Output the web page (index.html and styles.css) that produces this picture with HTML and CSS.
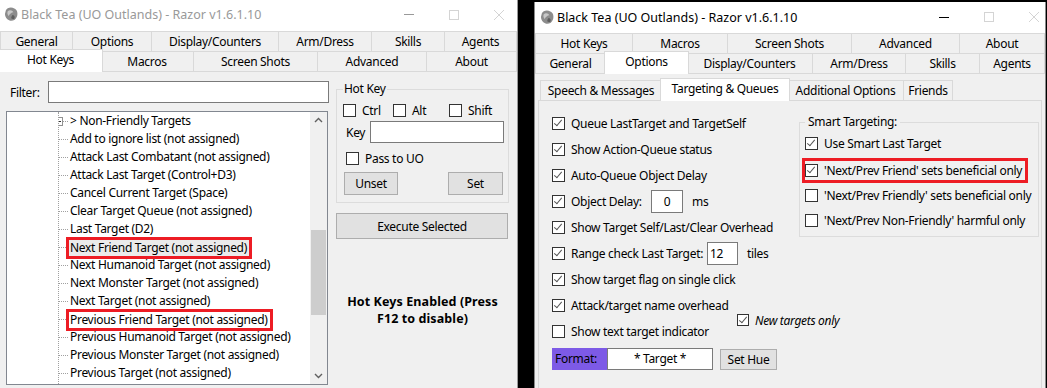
FILE: index.html
```html
<!DOCTYPE html>
<html lang="en">
<head>
  <meta charset="UTF-8">
  <title>Razor - Hot Keys / Targeting</title>
  <link rel="stylesheet" href="styles.css">
</head>
<body>
  <div class="desktop">

    <!-- Left window: Hot Keys tab -->
    <section class="window window-left">
      <div class="titlebar">
        <svg class="app-icon" viewBox="0 0 16 17"><path d="M2 4 C3 1 8 0 11 2 C14 3 15 7 14 10 C13 14 9 16 6 15 C3 14 1 11 1 8 Z" fill="#8c8c8c"/><path d="M4 5 C6 3 9 4 10 6 C8 6 6 8 5 10 C4 9 3 7 4 5 Z" fill="#c8c8c8"/><path d="M9 9 C11 9 12 11 11 13 C9 14 7 13 8 11 Z" fill="#5e5e5e"/></svg>
        <span class="title">Black Tea (UO Outlands) - Razor v1.6.1.10</span>
        <div class="controls">
          <span class="ctl-min"></span>
          <span class="ctl-max"></span>
          <svg class="ctl-close" viewBox="0 0 10 10"><path d="M0 0 L10 10 M10 0 L0 10" stroke="currentColor" stroke-width="1"/></svg>
        </div>
      </div>

      <div class="tabstrip">
        <div class="tabrow lrow-1">
          <div class="tab">General</div>
          <div class="tab">Options</div>
          <div class="tab">Display/Counters</div>
          <div class="tab">Arm/Dress</div>
          <div class="tab">Skills</div>
          <div class="tab">Agents</div>
        </div>
        <div class="tabrow lrow-2">
          <div class="tab active">Hot Keys</div>
          <div class="tab">Macros</div>
          <div class="tab">Screen Shots</div>
          <div class="tab">Advanced</div>
          <div class="tab">About</div>
        </div>
      </div>

      <div class="page hotkeys-page">
        <div class="hk-left">
          <div class="filter-row">
            <span class="filter-label">Filter:</span>
            <span class="textbox filter-box"></span>
          </div>
          <div class="tree">
            <ul class="tree-items">
              <li class="has-children">
                <svg class="expander" viewBox="0 0 9 9"><rect x="0.5" y="0.5" width="8" height="8" fill="#fff" stroke="#919191"/><path d="M2 4.5 H7 M4.5 2 V7" stroke="#333"/></svg>
                <span class="node">&gt; Non-Friendly Targets</span>
              </li>
              <li><span class="node">Add to ignore list (not assigned)</span></li>
              <li><span class="node">Attack Last Combatant (not assigned)</span></li>
              <li><span class="node">Attack Last Target (Control+D3)</span></li>
              <li><span class="node">Cancel Current Target (Space)</span></li>
              <li><span class="node">Clear Target Queue (not assigned)</span></li>
              <li><span class="node">Last Target (D2)</span></li>
              <li><span class="node selected marked">Next Friend Target (not assigned)</span></li>
              <li><span class="node">Next Humanoid Target (not assigned)</span></li>
              <li><span class="node">Next Monster Target (not assigned)</span></li>
              <li><span class="node">Next Target (not assigned)</span></li>
              <li><span class="node marked">Previous Friend Target (not assigned)</span></li>
              <li><span class="node">Previous Humanoid Target (not assigned)</span></li>
              <li><span class="node">Previous Monster Target (not assigned)</span></li>
              <li><span class="node">Previous Target (not assigned)</span></li>
            </ul>
            <div class="scrollbar">
              <svg class="sb-arrow" viewBox="0 0 17 17"><path d="M5 10 L8.5 6.5 L12 10" fill="none" stroke="#606060" stroke-width="1.4"/></svg>
              <div class="sb-track"><div class="sb-thumb"></div></div>
              <svg class="sb-arrow" viewBox="0 0 17 17"><path d="M5 7 L8.5 10.5 L12 7" fill="none" stroke="#606060" stroke-width="1.4"/></svg>
            </div>
          </div>
        </div>

        <div class="hk-right">
          <fieldset class="groupbox hotkey-group">
            <legend>Hot Key</legend>
            <div class="mod-row">
              <label class="chk"><span class="box"></span>Ctrl</label>
              <label class="chk"><span class="box"></span>Alt</label>
              <label class="chk"><span class="box"></span>Shift</label>
            </div>
            <div class="key-row">
              <span class="key-label">Key</span>
              <span class="textbox key-box"></span>
            </div>
            <label class="chk pass-row"><span class="box"></span>Pass to UO</label>
            <div class="btn-row">
              <span class="btn btn-unset">Unset</span>
              <span class="btn btn-set">Set</span>
            </div>
          </fieldset>
          <span class="btn btn-execute">Execute Selected</span>
          <p class="hk-status">Hot Keys Enabled (Press<br>F12 to disable)</p>
        </div>
      </div>
    </section>

    <!-- Right window: Options > Targeting & Queues -->
    <section class="window window-right">
      <div class="titlebar active">
        <svg class="app-icon" viewBox="0 0 16 17"><path d="M2 4 C3 1 8 0 11 2 C14 3 15 7 14 10 C13 14 9 16 6 15 C3 14 1 11 1 8 Z" fill="#8c8c8c"/><path d="M4 5 C6 3 9 4 10 6 C8 6 6 8 5 10 C4 9 3 7 4 5 Z" fill="#c8c8c8"/><path d="M9 9 C11 9 12 11 11 13 C9 14 7 13 8 11 Z" fill="#5e5e5e"/></svg>
        <span class="title">Black Tea (UO Outlands) - Razor v1.6.1.10</span>
        <div class="controls">
          <span class="ctl-min"></span>
          <span class="ctl-max"></span>
          <svg class="ctl-close" viewBox="0 0 10 10"><path d="M0 0 L10 10 M10 0 L0 10" stroke="currentColor" stroke-width="1"/></svg>
        </div>
      </div>

      <div class="tabstrip">
        <div class="tabrow rrow-1">
          <div class="tab">Hot Keys</div>
          <div class="tab">Macros</div>
          <div class="tab">Screen Shots</div>
          <div class="tab">Advanced</div>
          <div class="tab">About</div>
        </div>
        <div class="tabrow rrow-2">
          <div class="tab">General</div>
          <div class="tab active">Options</div>
          <div class="tab">Display/Counters</div>
          <div class="tab">Arm/Dress</div>
          <div class="tab">Skills</div>
          <div class="tab">Agents</div>
        </div>
      </div>

      <div class="page options-page">
        <div class="subtabs">
          <div class="subtab">Speech &amp; Messages</div>
          <div class="subtab active">Targeting &amp; Queues</div>
          <div class="subtab">Additional Options</div>
          <div class="subtab">Friends</div>
        </div>

        <div class="subpage tq-page">
          <div class="tq-options">
            <label class="chk opt"><span class="box on"></span>Queue LastTarget and TargetSelf</label>
            <label class="chk opt"><span class="box on"></span>Show Action-Queue status</label>
            <label class="chk opt"><span class="box on"></span>Auto-Queue Object Delay</label>
            <div class="chk opt">
              <span class="box on"></span><span class="delay-label">Object Delay:</span>
              <span class="textbox num-box centered">0</span><span class="unit">ms</span>
            </div>
            <label class="chk opt"><span class="box on"></span>Show Target Self/Last/Clear Overhead</label>
            <div class="chk opt">
              <span class="box on"></span><span class="range-label">Range check Last Target:</span>
              <span class="textbox num-box">12</span><span class="unit">tiles</span>
            </div>
            <label class="chk opt"><span class="box on"></span>Show target flag on single click</label>
            <div class="opt-pair">
              <label class="chk opt"><span class="box on"></span>Attack/target name overhead</label>
              <label class="chk sub-opt"><span class="box on"></span>New targets only</label>
              <label class="chk opt"><span class="box"></span>Show text target indicator</label>
            </div>
            <div class="format-row">
              <span class="format-label">Format:</span>
              <span class="textbox format-box">* Target *</span>
              <span class="btn btn-hue">Set Hue</span>
            </div>
          </div>

          <fieldset class="groupbox smart-group">
            <legend>Smart Targeting:</legend>
            <label class="chk smart-opt"><span class="box on"></span>Use Smart Last Target</label>
            <label class="chk smart-opt marked"><span class="box on"></span>'Next/Prev Friend' sets beneficial only</label>
            <label class="chk smart-opt"><span class="box"></span>'Next/Prev Friendly' sets beneficial only</label>
            <label class="chk smart-opt"><span class="box"></span>'Next/Prev Non-Friendly' harmful only</label>
          </fieldset>
        </div>
      </div>
    </section>

  </div>
</body>
</html>
```

FILE: styles.css
```css
/* Razor window mock-up */
* {
  box-sizing: border-box;
}

body {
  margin: 0;
  background-color: #000;
  font-family: "Noto Sans", "Open Sans", sans-serif;
  font-size: 12px;
  letter-spacing: -0.3px;
  color: #000;
}

.desktop {
  display: flex;
  align-items: flex-start;
  height: 388px;
  overflow: hidden;
}

.window {
  background-color: #f0f0f0;
  height: 388px;
  overflow: hidden;
}

.window-left {
  width: 518px;
  border-right: 1px solid #9a9a9a;
}

.window-right {
  width: 512px;
  margin-left: 16px;
  margin-top: 2px;
  border-left: 1px solid #8a8a8a;
  border-right: 1px solid #8a8a8a;
}

/* title bar */
.titlebar {
  height: 31px;
  background-color: #fff;
  display: flex;
  align-items: center;
  padding: 0 13px 2px 4px;
}

.window-right .titlebar {
  padding: 0 6px 1px 5px;
}

.app-icon {
  width: 15px;
  height: 17px;
  flex: none;
}

.title {
  margin-left: 2px;
  color: #999;
  font-size: 12.5px;
  letter-spacing: 0;
  white-space: nowrap;
}

.titlebar.active .title {
  color: #000;
}

.controls {
  margin-left: auto;
  display: flex;
  align-items: center;
  gap: 35px;
  color: #d4d4d4;
}

.ctl-min {
  width: 10px;
  height: 1px;
  background-color: #999;
}

.titlebar.active .ctl-min {
  background-color: #000;
}

.ctl-max {
  width: 10px;
  height: 10px;
  border: 1px solid #d4d4d4;
}

.ctl-close {
  width: 10px;
  height: 10px;
}

/* tab strips */
.tabrow {
  display: grid;
  height: 20px;
}

.lrow-1 { grid-template-columns: 73px 79px 127px 93px 73px 1fr; }
.lrow-2 { grid-template-columns: 101px 93px 124px 109px 1fr; }
.rrow-1 { grid-template-columns: 98px 95px 124px 108px 1fr; }
.rrow-2 { grid-template-columns: 71px 81px 126px 93px 74px 1fr; }

.tab {
  display: flex;
  align-items: center;
  justify-content: center;
  background-color: #f0f0f0;
  border-top: 1px solid #d9d9d9;
  border-right: 1px solid #d9d9d9;
  white-space: nowrap;
  padding-bottom: 1px;
}

.tab:first-child {
  border-left: 1px solid #d9d9d9;
}

.tab.active {
  position: relative;
  z-index: 1;
  background-color: #fff;
  margin: -2px -2px -1px -2px;
  border-left: 1px solid #d9d9d9;
  padding-bottom: 3px;
}

.page {
  border-top: 1px solid #d9d9d9;
  height: 100%;
}

/* hot keys page */
.hotkeys-page {
  display: flex;
  gap: 7px;
  padding: 9px 0 0 6px;
}

.hk-left {
  width: 323px;
  flex: none;
}

.filter-row {
  display: flex;
  align-items: center;
  height: 22px;
}

.filter-label {
  margin-left: 4px;
}

.textbox {
  display: block;
  height: 22px;
  background-color: #fff;
  border: 1px solid #7a7a7a;
}

.filter-box {
  width: 281px;
  margin-left: auto;
}

.tree {
  display: flex;
  width: 322px;
  height: 274px;
  margin-top: 8px;
  border: 1px solid #828790;
  background-color: #fff;
}

.tree-items {
  flex: 1;
  list-style: none;
  margin: 0 0 0 51px;
  padding: 0;
  border-left: 1px dotted #a0a0a0;
  overflow: hidden;
}

.tree-items li {
  position: relative;
  height: 18px;
  display: flex;
  align-items: center;
  white-space: nowrap;
}

.tree-items li::before {
  content: "";
  width: 9px;
  margin-right: 1px;
  border-top: 1px dotted #a0a0a0;
  flex: none;
}

.expander {
  position: absolute;
  left: -5px;
  top: 5px;
  width: 9px;
  height: 9px;
}

.node {
  padding: 0 1px;
  line-height: 16px;
}

.node.selected {
  background-color: #ebebeb;
}

.node.marked {
  align-self: flex-end;
  outline: 3px solid #ed1c24;
  padding-right: 2px;
}

.scrollbar {
  width: 17px;
  flex: none;
  display: flex;
  flex-direction: column;
  background-color: #f0f0f0;
}

.sb-arrow {
  width: 17px;
  height: 17px;
  flex: none;
}

.sb-track {
  flex: 1;
  padding: 101px 1px 0;
}

.sb-thumb {
  height: 85px;
  background-color: #cdcdcd;
}

.hk-right {
  width: 173px;
  flex: none;
  display: flex;
  flex-direction: column;
}

/* group boxes */
.groupbox {
  margin: 0;
  min-width: 0;
  border: 1px solid #dcdcdc;
}

.groupbox legend {
  line-height: 16px;
}

.hotkey-group {
  padding: 0 5px 7px 6px;
}

.hotkey-group legend {
  padding: 0 1px;
}

/* checkboxes */
.chk {
  display: flex;
  align-items: center;
  white-space: nowrap;
}

.box {
  position: relative;
  width: 13px;
  height: 13px;
  flex: none;
  margin-right: 6px;
  border: 1px solid #333;
  background-color: #fff;
}

.box.on::after {
  content: "";
  position: absolute;
  left: 3px;
  top: 0px;
  width: 3px;
  height: 7px;
  border-right: 1.5px solid #555;
  border-bottom: 1.5px solid #555;
  transform: rotate(40deg);
}

.mod-row {
  display: grid;
  grid-template-columns: 50px 56px auto;
  height: 17px;
  margin-top: 5px;
}

.key-row {
  display: flex;
  align-items: center;
  margin-top: 2px;
  padding-left: 3px;
}

.key-box {
  width: 134px;
  margin-left: auto;
  margin-right: -1px;
}

.pass-row {
  height: 16px;
  margin-top: 7px;
  padding-left: 3px;
}

.btn-row {
  display: flex;
  justify-content: space-between;
  margin-top: 6px;
}

.btn {
  display: flex;
  align-items: center;
  justify-content: center;
  background-color: #e1e1e1;
  border: 1px solid #adadad;
  white-space: nowrap;
}

.btn-unset {
  width: 54px;
  height: 23px;
  margin-left: 1px;
}

.btn-set {
  width: 55px;
  height: 23px;
}

.btn-execute {
  height: 26px;
  width: 172px;
  margin-top: 10px;
}

.hk-status {
  margin: 54px 0 0;
  text-align: center;
  font-weight: bold;
  font-size: 12.5px;
  letter-spacing: 0.1px;
  line-height: 17px;
}

/* options page */
.subtabs {
  display: flex;
  height: 26px;
  padding: 6px 0 0 5px;
}

.subtab {
  height: 20px;
  display: flex;
  align-items: center;
  justify-content: center;
  background-color: #f0f0f0;
  border-top: 1px solid #d9d9d9;
  border-right: 1px solid #d9d9d9;
  white-space: nowrap;
  padding-bottom: 1px;
}

.subtab:nth-child(1) { width: 122px; border-left: 1px solid #d9d9d9; }
.subtab:nth-child(2) { width: 126px; }
.subtab:nth-child(3) { width: 116px; }
.subtab:nth-child(4) { width: 49px; }

.subtab.active {
  position: relative;
  z-index: 1;
  height: 23px;
  width: 130px;
  margin: -2px -2px -1px -2px;
  background-color: #fff;
  border-left: 1px solid #d9d9d9;
  padding-bottom: 3px;
}

.subpage {
  margin: 0 3px;
  height: 100%;
  border: 1px solid #d9d9d9;
}

.tq-page {
  display: grid;
  grid-template-columns: 247px 240px;
  align-items: start;
  padding: 9px 0 0 13px;
}

.tq-options {
  display: flex;
  flex-direction: column;
}

.opt {
  height: 26px;
}

.delay-label {
  width: 80px;
}

.range-label {
  width: 136px;
}

.num-box {
  height: 23px;
  width: 31px;
  line-height: 21px;
  padding-left: 2px;
}

.num-box.centered {
  width: 32px;
  padding-left: 0;
  text-align: center;
}

.unit {
  margin-left: 9px;
}

.opt-pair {
  display: grid;
  grid-template-columns: 185px auto;
  grid-template-rows: 26px 26px;
}

.sub-opt {
  grid-column: 2;
  grid-row: 1 / span 2;
  align-self: center;
  margin-top: 4px;
  font-style: italic;
}

.sub-opt .box {
  width: 12px;
  height: 12px;
}

.format-row {
  display: flex;
  align-items: center;
  height: 22px;
  margin-top: 4px;
}

.format-label {
  width: 55px;
  height: 22px;
  line-height: 22px;
  padding-left: 3px;
  background-color: #7d5ae6;
}

.format-box {
  width: 106px;
  text-align: center;
  line-height: 20px;
}

.btn-hue {
  width: 57px;
  height: 21px;
  margin-left: 7px;
}

.smart-group {
  margin-top: 4px;
  padding: 0 5px 6px;
  display: flex;
  flex-direction: column;
  gap: 6px;
}

.smart-group legend {
  padding: 0 3px;
}

.smart-opt {
  height: 19px;
}

.smart-opt:first-of-type {
  margin-top: 4px;
}

.smart-opt.marked {
  margin-top: 2px;
  width: 220px;
  outline: 3px solid #ed1c24;
}
```
